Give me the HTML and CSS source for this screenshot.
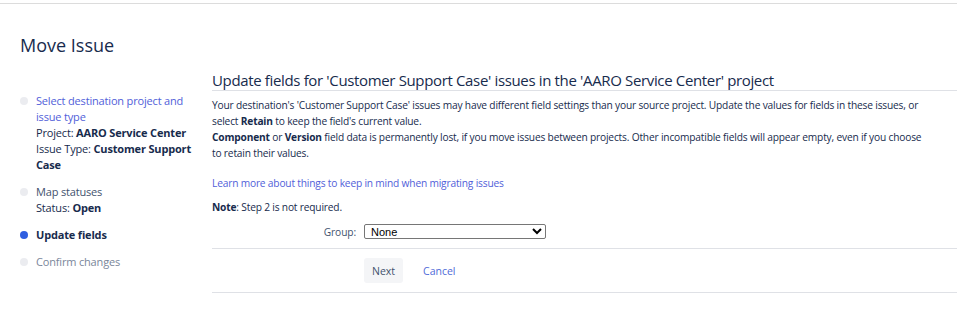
FILE: index.html
```html
<!DOCTYPE html>
<html>
<head>
  <title>Move Issue</title>
  <meta http-equiv="Content-Type" content="text/html; charset=UTF-8" />
  <link rel="stylesheet" href="styles.css">
</head>
<body>
  <div class="topbar"></div>
  <div class="page">
    <h1 class="page-title">Move Issue</h1>
    <div class="layout">
      <ul class="steps">
        <li class="step done">
          <a href="#">Select destination project and issue type</a>
          <div class="step-info">Project: <b>AARO Service Center</b></div>
          <div class="step-info">Issue Type: <b>Customer Support Case</b></div>
        </li>
        <li class="step done">
          <span class="step-name">Map statuses</span>
          <div class="step-info">Status: <b>Open</b></div>
        </li>
        <li class="step current">
          <span class="step-name">Update fields</span>
        </li>
        <li class="step todo">
          <span class="step-name">Confirm changes</span>
        </li>
      </ul>
      <div class="main">
        <h2 class="section-title">Update fields for 'Customer Support Case' issues in the 'AARO Service Center' project</h2>
        <p class="intro">Your destination's 'Customer Support Case' issues may have different field settings than your source project. Update the values for fields in these issues, or select <b>Retain</b> to keep the field's current value.<br><b>Component</b> or <b>Version</b> field data is permanently lost, if you move issues between projects. Other incompatible fields will appear empty, even if you choose to retain their values.</p>
        <p class="learn"><a href="#">Learn more about things to keep in mind when migrating issues</a></p>
        <p class="note"><b>Note</b>: Step 2 is not required.</p>
        <div class="field">
          <label for="group">Group:</label>
          <select id="group">
            <option>None</option>
          </select>
        </div>
        <div class="buttons">
          <button type="button" class="btn">Next</button>
          <a href="#" class="cancel">Cancel</a>
        </div>
      </div>
    </div>
  </div>
</body>
</html>
```

FILE: styles.css
```css
body {
  margin: 0;
  font-family: "Open Sans", "Noto Sans", sans-serif;
  color: #172b4d;
  background: #fff;
}
a {
  text-decoration: none;
}
.topbar {
  height: 3px;
  border-bottom: 1px solid #dcdcdc;
}
.page {
  padding-left: 20px;
}
.page-title {
  margin: 29px 0 13px;
  font-size: 18px;
  line-height: 24px;
  font-weight: 500;
  color: #172b4d;
}
.layout {
  display: flex;
  gap: 20px;
}
.steps {
  list-style: none;
  margin: 0;
  padding: 23px 0 0;
  width: 172px;
  flex-shrink: 0;
  font-size: 11px;
  line-height: 16px;
  letter-spacing: -0.17px;
}
.step {
  position: relative;
  padding-left: 16px;
  margin-bottom: 11px;
  color: #42526e;
}
.step::before {
  content: "";
  position: absolute;
  left: 0;
  top: 4px;
  width: 8px;
  height: 8px;
  border-radius: 50%;
  background: #ebecf0;
}
.step a {
  color: #5160d9;
}
.step-info {
  color: #172b4d;
}
.step.current {
  font-weight: 700;
  color: #172b4d;
}
.step.current::before {
  background: #2f5ee0;
}
.step.todo {
  color: #7a869a;
}
.main {
  flex: 1;
  min-width: 0;
}
.section-title {
  margin: 0;
  font-size: 15px;
  line-height: 20px;
  font-weight: 500;
  letter-spacing: -0.35px;
  color: #172b4d;
  border-bottom: 1px solid #dfe1e6;
}
.intro,
.learn,
.note {
  font-size: 10.2px;
  line-height: 16px;
  letter-spacing: -0.18px;
}
.intro {
  margin: 6px 0 0;
  padding-right: 28px;
}
.learn {
  margin: 14px 0 0;
}
.learn a {
  color: #5160d9;
}
.note {
  margin: 8px 0 0;
}
.field {
  display: flex;
  align-items: center;
  margin-top: 9px;
  padding-bottom: 9px;
  border-bottom: 1px solid #dfe1e6;
  font-size: 10.2px;
  letter-spacing: -0.1px;
}
.field label {
  width: 144px;
  margin-right: 8px;
  text-align: right;
  color: #42526e;
}
.field select {
  width: 182px;
  height: 15px;
  padding: 0 2px;
  font-family: "Liberation Sans", Arial, sans-serif;
  font-size: 11px;
  color: #000;
  border: 1px solid #767676;
  border-radius: 2px;
  background: #fff;
}
.buttons {
  display: flex;
  align-items: center;
  gap: 20px;
  padding: 9px 0 9px 152px;
  border-bottom: 1px solid #dfe1e6;
  font-size: 10.5px;
}
.btn {
  height: 25px;
  padding: 0 8px;
  border: none;
  border-radius: 3px;
  background: #f4f5f7;
  color: #42526e;
  font-family: inherit;
  font-size: 10.5px;
}
.cancel {
  color: #4f6bd8;
}
```
